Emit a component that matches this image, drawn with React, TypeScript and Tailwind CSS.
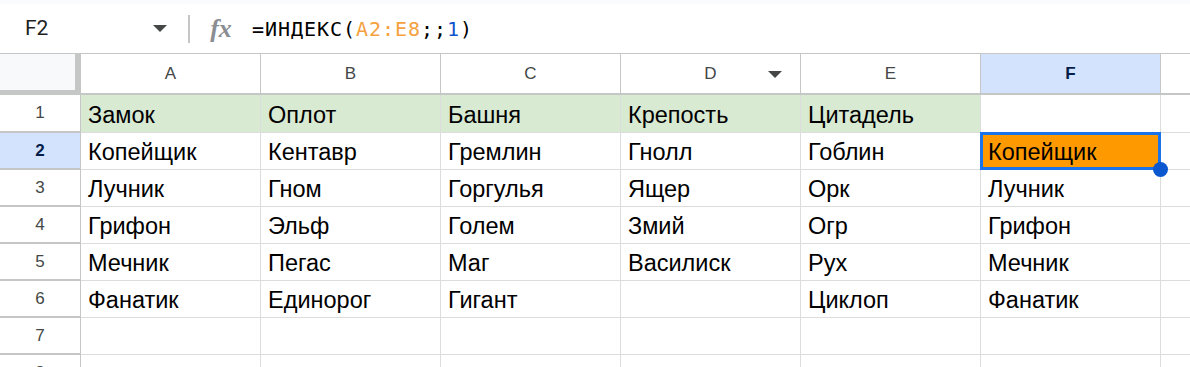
import React from 'react';

const cols = ['A', 'B', 'C', 'D', 'E', 'F'];

const rows: string[][] = [
  ['Замок', 'Оплот', 'Башня', 'Крепость', 'Цитадель', ''],
  ['Копейщик', 'Кентавр', 'Гремлин', 'Гнолл', 'Гоблин', 'Копейщик'],
  ['Лучник', 'Гном', 'Горгулья', 'Ящер', 'Орк', 'Лучник'],
  ['Грифон', 'Эльф', 'Голем', 'Змий', 'Огр', 'Грифон'],
  ['Мечник', 'Пегас', 'Маг', 'Василиск', 'Рух', 'Мечник'],
  ['Фанатик', 'Единорог', 'Гигант', '', 'Циклоп', 'Фанатик'],
  ['', '', '', '', '', ''],
  ['', '', '', '', '', ''],
];

const Triangle: React.FC<{ className?: string }> = ({ className }) => (
  <svg width="14" height="8" viewBox="0 0 14 8" className={className}>
    <path d="M0 0 L14 0 L7 7 Z" fill="#444746" />
  </svg>
);

const App: React.FC = () => {
  return (
    <div className="w-[1190px] h-[367px] overflow-hidden bg-white font-['Liberation_Sans',Arial,sans-serif]">
      {/* top strip */}
      <div className="h-[4px] bg-[#f9fbfd]" />

      {/* formula bar */}
      <div className="h-[49px] flex items-center">
        <div className="w-[188px] flex items-center pl-[25px] pr-[21px]">
          <span className="text-[21px] text-[#1f1f1f] font-['Roboto',sans-serif]">F2</span>
          <Triangle className="ml-auto" />
        </div>
        <div className="w-[2px] h-[28px] bg-[#c4c7c5]" />
        <div className="w-[62px] flex items-center justify-center">
          <span className="font-['Liberation_Serif',serif] italic font-bold text-[26px] text-[#8a8d91] leading-none">fx</span>
        </div>
        <div className="font-['DejaVu_Sans_Mono',monospace] text-[20px] tracking-[0.95px] text-[#000]">
          =ИНДЕКС(<span className="text-[#f4a13e]">A2:E8</span>;;<span className="text-[#1155cc]">1</span>)
        </div>
      </div>

      {/* column headers */}
      <div className="flex h-[42px] border-t border-[#c4c7c5]">
        <div className="w-[81px] shrink-0 bg-[#f8f9fa] border-r-[6px] border-b-[5px] border-[#c4c7c5]" />
        {cols.map((c) => (
          <div
            key={c}
            className={`relative w-[180px] shrink-0 flex items-center justify-center border-r border-b-2 border-[#c4c7c5] text-[17px] ${
              c === 'F' ? 'bg-[#d3e3fd] text-[#041e49] font-bold' : 'text-[#444746]'
            }`}
          >
            {c}
            {c === 'D' && <Triangle className="absolute right-[18px] top-[17px]" />}
          </div>
        ))}
        <div className="flex-1 border-b-2 border-[#c4c7c5]" />
      </div>

      {/* rows */}
      {rows.map((r, i) => {
        const n = i + 1;
        return (
          <div key={n} className={`flex ${n === 1 ? 'h-[38px]' : 'h-[37px]'}`}>
            <div
              className={`w-[81px] shrink-0 flex items-center justify-center border-r border-b-2 border-[#c4c7c5] text-[17px] ${
                n === 2 ? 'bg-[#d3e3fd] text-[#041e49] font-bold' : 'text-[#444746]'
              }`}
            >
              {n}
            </div>
            {r.map((v, j) => {
              const selected = n === 2 && j === 5;
              const green = n === 1 && j < 5;
              return (
                <div
                  key={j}
                  className={`relative w-[180px] shrink-0 flex items-center pl-[7px] pt-[2px] border-r border-b border-[#dcdcdc] text-[23.5px] leading-[26px] text-black ${
                    green ? 'bg-[#d9ead3]' : selected ? 'bg-[#ff9900]' : ''
                  }`}
                >
                  {v}
                  {selected && (
                    <>
                      <div className="absolute -left-[1px] -top-[1px] -right-[1px] -bottom-[1px] border-[3px] border-[#1a73e8]" />
                      <div className="absolute z-10 -right-[8px] -bottom-[8px] w-[15px] h-[15px] rounded-full bg-[#0b57d0]" />
                    </>
                  )}
                </div>
              );
            })}
            <div className="flex-1 border-b border-[#dcdcdc]" />
          </div>
        );
      })}
    </div>
  );
};

export default App;
